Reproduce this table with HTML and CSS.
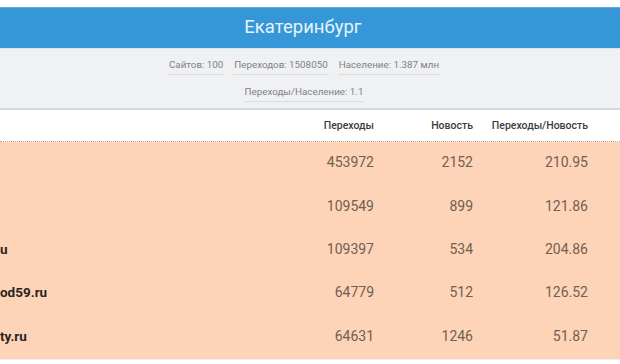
FILE: index.html
```html
<!DOCTYPE html>
<html lang="ru">
<head>
<meta charset="utf-8">
<link rel="stylesheet" href="styles.css">
</head>
<body>
<div class="page">
  <div class="titlebar">Екатеринбург</div>
  <div class="stats">
    <div class="stats-line">
      <span class="stat">Сайтов: 100</span>
      <span class="stat">Переходов: 1508050</span>
      <span class="stat">Население: 1.387 млн</span>
    </div>
    <div class="stats-line">
      <span class="stat">Переходы/Население: 1.1</span>
    </div>
  </div>
  <div class="table">
    <div class="row head">
      <div class="name"></div>
      <div class="num">Переходы</div>
      <div class="num">Новость</div>
      <div class="num">Переходы/Новость</div>
    </div>
    <div class="body">
      <div class="row">
        <div class="name"></div>
        <div class="num">453972</div>
        <div class="num">2152</div>
        <div class="num">210.95</div>
      </div>
      <div class="row">
        <div class="name"></div>
        <div class="num">109549</div>
        <div class="num">899</div>
        <div class="num">121.86</div>
      </div>
      <div class="row">
        <div class="name">u</div>
        <div class="num">109397</div>
        <div class="num">534</div>
        <div class="num">204.86</div>
      </div>
      <div class="row">
        <div class="name">od59.ru</div>
        <div class="num">64779</div>
        <div class="num">512</div>
        <div class="num">126.52</div>
      </div>
      <div class="row">
        <div class="name">ty.ru</div>
        <div class="num">64631</div>
        <div class="num">1246</div>
        <div class="num">51.87</div>
      </div>
    </div>
  </div>
</div>
</body>
</html>
```
FILE: styles.css
```css
html, body {
  margin: 0;
  padding: 0;
  background: #f6f6f6;
  font-family: Roboto, "Noto Sans", sans-serif;
}
.page {
  width: 620px;
  height: 364px;
  overflow: hidden;
  background: #ffffff;
  padding-top: 7px;
  box-sizing: border-box;
}
.titlebar {
  height: 41px;
  background: #3597d8;
  border-top: 1px solid #5aa9e0;
  box-sizing: border-box;
  color: #e6f3fc;
  font-size: 18.5px;
  font-weight: 400;
  display: flex;
  align-items: center;
  justify-content: center;
  padding: 0 14px 2px 0;
}
.stats {
  background: #f0f1f3;
  border-top: 1px solid #d7e6f1;
  border-bottom: 2px solid #d7d8da;
  height: 62px;
  box-sizing: border-box;
  display: flex;
  flex-direction: column;
  align-items: center;
  padding: 8px 12px 0 0;
  gap: 9px;
}
.stats-line {
  display: flex;
  gap: 9px;
}
.stat {
  font-size: 9.8px;
  color: #808285;
  line-height: 15px;
  padding: 0 1px 2px;
  border-bottom: 1px solid #dcdde0;
}
.table {
  background: #fdd4b8;
}
.row {
  display: grid;
  grid-template-columns: 1fr 120px 99px 115px;
  padding-right: 32px;
  align-items: center;
}
.head {
  background: #ffffff;
  height: 32px;
  border-bottom: 1px dotted #c7a58c;
  box-sizing: border-box;
  padding-bottom: 1px;
}
.head .num {
  font-size: 10.5px;
  font-weight: 500;
  color: #3c3c3c;
}
.body {
  height: 217px;
  border-bottom: 1px solid #eee;
}
.body .row {
  height: 43.4px;
  padding-bottom: 3px;
  box-sizing: border-box;
}
.num {
  text-align: right;
  font-size: 14px;
  color: #735e51;
}
.name {
  font-size: 13.5px;
  font-weight: 700;
  color: #2b2420;
}
```
